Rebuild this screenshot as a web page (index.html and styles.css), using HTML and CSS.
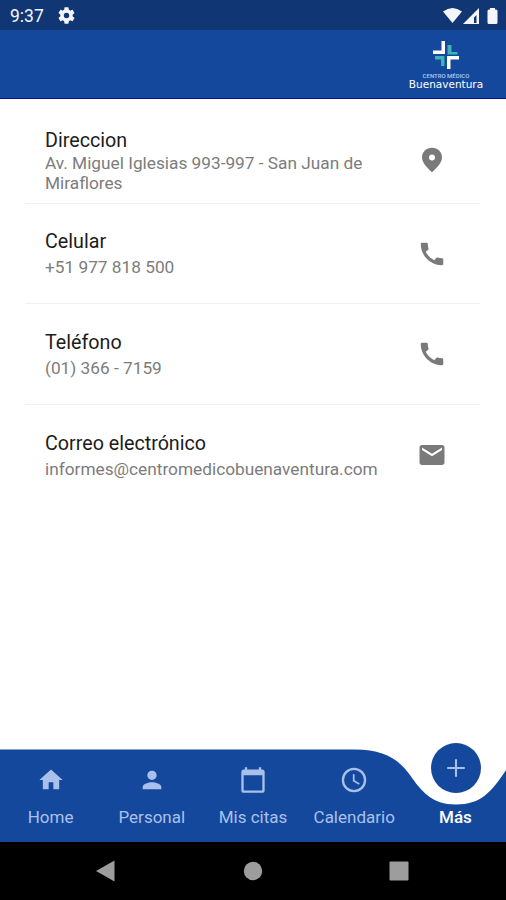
FILE: index.html
```html
<!DOCTYPE html>
<html lang="es">

<head>
    <meta charset="UTF-8">
    <meta name="viewport" content="width=device-width, initial-scale=1.0">
    <title>Centro Médico Buenaventura</title>
    <link rel="stylesheet" href="styles.css">
</head>

<body>
    <div class="screen">
        <div class="status-bar">
            <span class="time">9:37</span>
            <svg class="gear" viewBox="2 2 20 20"><path d="M19.14 12.94c.04-.3.06-.61.06-.94 0-.32-.02-.64-.07-.94l2.03-1.58a.49.49 0 0 0 .12-.61l-1.92-3.32a.49.49 0 0 0-.59-.22l-2.39.96c-.5-.38-1.03-.7-1.62-.94l-.36-2.54a.48.48 0 0 0-.48-.41h-3.84c-.24 0-.43.17-.47.41l-.36 2.54c-.59.24-1.13.57-1.62.94l-2.39-.96a.48.48 0 0 0-.59.22L2.74 8.87c-.12.21-.08.47.12.61l2.03 1.58c-.05.3-.09.63-.09.94s.02.64.07.94l-2.03 1.58a.49.49 0 0 0-.12.61l1.92 3.32c.12.22.37.29.59.22l2.39-.96c.5.38 1.03.7 1.62.94l.36 2.54c.05.24.24.41.48.41h3.84c.24 0 .44-.17.47-.41l.36-2.54c.59-.24 1.13-.56 1.62-.94l2.39.96c.22.08.47 0 .59-.22l1.92-3.32a.48.48 0 0 0-.12-.61l-2.01-1.58zM12 15.200A3.200 3.200 0 1 1 12 8.800a3.200 3.200 0 0 1 0 6.400z"/></svg>
            <svg class="signals" viewBox="0 0 56 18">
                <path d="M0 4.500Q9.500-2.500 19 4.500L9.500 16z"/>
                <path d="M36 1V17H20zM33.500 8L31 10.500V16h2.500z" fill-rule="evenodd"/>
                <path d="M47 1h5v1.500h1q1.500 0 1.500 1.500v11.500q0 1.500-1.500 1.500h-7q-1.500 0-1.500-1.500V4q0-1.500 1.500-1.500h1z"/>
            </svg>
        </div>

        <header class="app-bar">
            <div class="brand">
                <svg class="brand-mark" viewBox="0 0 28 28">
                    <path class="teal" d="M15.500 4h4v7h6v2.500h-10zM3 15h9.500v10H9v-6.500H3z"/>
                    <path class="white" d="M9.500 0h3.500v13H1V9.500h8.500zM15 15h12v3.500h-8.500V28H15z"/>
                </svg>
                <span class="brand-top">CENTRO MÉDICO</span>
                <span class="brand-name">Buenaventura</span>
            </div>
        </header>

        <main class="contacts">
            <div class="contact contact-address">
                <div class="contact-text">
                    <h2>Direccion</h2>
                    <p>Av. Miguel Iglesias 993-997 - San Juan de Miraflores</p>
                </div>
                <svg class="contact-icon" viewBox="0 0 24 24"><path d="M12 2.200C7.500 2.200 4 5.600 4 9.800c0 4.700 4.500 8.700 8 12 3.500-3.300 8-7.300 8-12 0-4.200-3.500-7.600-8-7.600zm0 10.100a2.400 2.400 0 1 1 0-4.800 2.400 2.400 0 0 1 0 4.800z"/></svg>
            </div>
            <div class="contact">
                <div class="contact-text">
                    <h2>Celular</h2>
                    <p>+51 977 818 500</p>
                </div>
                <svg class="contact-icon" viewBox="0 0 24 24"><path d="M20.010 15.380c-1.230 0-2.420-.2-3.530-.56a.98.98 0 0 0-1.010.24l-1.570 1.970c-2.830-1.350-5.480-3.900-6.890-6.830l1.950-1.660c.27-.28.35-.67.24-1.020-.37-1.110-.56-2.300-.56-3.530 0-.54-.45-.99-.99-.99H4.190C3.650 3 3 3.240 3 3.990 3 13.280 10.730 21 20.010 21c.71 0 .99-.63.99-1.180v-3.450c0-.54-.45-.99-.99-.99z"/></svg>
            </div>
            <div class="contact">
                <div class="contact-text">
                    <h2>Teléfono</h2>
                    <p>(01) 366 - 7159</p>
                </div>
                <svg class="contact-icon" viewBox="0 0 24 24"><path d="M20.010 15.380c-1.230 0-2.420-.2-3.530-.56a.98.98 0 0 0-1.010.24l-1.570 1.970c-2.830-1.350-5.480-3.900-6.890-6.830l1.950-1.660c.27-.28.35-.67.24-1.020-.37-1.110-.56-2.300-.56-3.530 0-.54-.45-.99-.99-.99H4.190C3.650 3 3 3.240 3 3.990 3 13.280 10.730 21 20.010 21c.71 0 .99-.63.99-1.180v-3.450c0-.54-.45-.99-.99-.99z"/></svg>
            </div>
            <div class="contact">
                <div class="contact-text">
                    <h2>Correo electrónico</h2>
                    <p>informes@centromedicobuenaventura.com</p>
                </div>
                <svg class="contact-icon" viewBox="0 0 24 24"><path d="M20 4H4c-1.100 0-1.990.9-1.990 2L2 18c0 1.100.9 2 2 2h16c1.100 0 2-.9 2-2V6c0-1.100-.9-2-2-2zm0 4l-8 5-8-5V6l8 5 8-5v2z"/></svg>
            </div>
        </main>

        <nav class="tab-bar">
            <!-- bar background with the dip under the active tab -->
            <svg class="tab-curve" viewBox="0 0 506 93">
                <path d="M0 .5H355C385 .5 399 11 410 26C421 42 432 55.500 456 55.500C480 55.500 491 44 506 21V93H0z"/>
            </svg>
            <a class="tab">
                <svg viewBox="0 0 24 24"><path d="M10 20v-6h4v6h5v-8h3L12 3 2 12h3v8z"/></svg>
                <span>Home</span>
            </a>
            <a class="tab">
                <svg viewBox="0 0 24 24"><path d="M12 12c2.210 0 4-1.790 4-4s-1.790-4-4-4-4 1.790-4 4 1.790 4 4 4zm0 2c-2.670 0-8 1.340-8 4v2h16v-2c0-2.660-5.330-4-8-4z"/></svg>
                <span>Personal</span>
            </a>
            <a class="tab">
                <svg viewBox="0 0 24 24"><path d="M20 3h-1V1h-2v2H7V1H5v2H4c-1.100 0-2 .9-2 2v16c0 1.100.9 2 2 2h16c1.100 0 2-.9 2-2V5c0-1.100-.9-2-2-2zm0 18H4V8h16v13z"/></svg>
                <span>Mis citas</span>
            </a>
            <a class="tab">
                <svg viewBox="0 0 24 24"><path d="M12 1.500a10.500 10.500 0 1 0 0 21 10.500 10.500 0 0 0 0-21zm0 19a8.500 8.500 0 1 1 0-17 8.500 8.500 0 0 1 0 17zM12.500 7H11v6l5.250 3.150.75-1.230-4.500-2.670z"/></svg>
                <span>Calendario</span>
            </a>
            <a class="tab active">
                <div class="tab-bubble">
                    <svg viewBox="0 0 24 24"><path d="M19.500 12.900h-6.600v6.600h-1.800v-6.600H4.500v-1.800h6.600V4.500h1.800v6.600h6.600z"/></svg>
                </div>
                <span>Más</span>
            </a>
        </nav>

        <div class="system-bar">
            <svg viewBox="0 0 20 22"><path d="M0 11L18.500.5v21z"/></svg>
            <svg viewBox="0 0 20 22"><circle cx="10" cy="11" r="9.200"/></svg>
            <svg viewBox="0 0 20 22"><rect x=".5" y="1.500" width="19" height="19" rx="1"/></svg>
        </div>
    </div>
</body>

</html>
```

FILE: styles.css
```css
* {
    box-sizing: border-box;
}

body {
    margin: 0;
    font-family: Roboto, "Liberation Sans", sans-serif;
    background-color: #ffffff;
}

h2,
p {
    margin: 0;
    font-weight: 400;
}

svg {
    display: block;
    fill: currentColor;
}

.screen {
    display: flex;
    flex-direction: column;
    width: 506px;
    height: 900px;
    overflow: hidden;
}

.status-bar {
    display: flex;
    align-items: center;
    height: 30px;
    padding: 1px 7px 0 10px;
    background-color: #103674;
    color: #f4f5ff;
}

.time {
    font-size: 17.5px;
    line-height: 30px;
}

.gear {
    width: 17px;
    height: 17px;
    margin-left: 14px;
}

.signals {
    width: 56px;
    height: 18px;
    margin-left: auto;
}

.app-bar {
    display: flex;
    justify-content: flex-end;
    height: 69px;
    padding: 11px 22px 0 0;
    background-color: #14489c;
    border-bottom: 1px solid #07108a;
}

.brand {
    display: flex;
    flex-direction: column;
    align-items: center;
    width: 76px;
    color: #ffffff;
    white-space: nowrap;
}

.brand-mark {
    width: 28px;
    height: 28px;
}

.brand-mark .teal {
    fill: #3fb3b5;
}

.brand-top {
    margin-top: 3px;
    font-size: 6px;
    font-weight: 500;
    line-height: 7px;
    color: #b9c8e8;
}

.brand-name {
    font-family: "DejaVu Sans", sans-serif;
    font-size: 10.5px;
    line-height: 11px;
}

.contacts {
    flex: 1;
    padding: 4px 26px 0 25px;
}

.contact {
    display: flex;
    align-items: center;
    height: 100.5px;
    padding: 3px 33px 0 20px;
    border-bottom: 1px solid #f1f1f1;
}

.contact:last-child {
    border-bottom: none;
}

.contact-text {
    width: 345px;
}

.contact h2 {
    font-size: 19.7px;
    line-height: 26px;
    color: #1c1c1c;
}

.contact p {
    font-size: 17.25px;
    line-height: 25px;
    color: #7c7c7c;
}

.contact-address {
    padding-top: 16px;
}

.contact-address h2 {
    line-height: 24px;
}

.contact-address p {
    width: 330px;
    line-height: 20px;
}

.contact-icon {
    width: 30px;
    height: 30px;
    margin: 0 0 2px auto;
    color: #7a7a7a;
}

.tab-bar {
    position: relative;
    display: flex;
    height: 93px;
    color: #a9c0ec;
}

.tab-curve {
    position: absolute;
    top: 0;
    left: 0;
    width: 506px;
    height: 93px;
    color: #14489c;
}

.tab {
    position: relative;
    display: flex;
    flex: 1;
    flex-direction: column;
    align-items: center;
    padding-top: 17px;
}

.tab svg {
    width: 28px;
    height: 28px;
}

.tab span {
    margin-top: 11px;
    font-size: 17px;
    line-height: 24px;
}

.tab.active {
    padding-top: 0;
}

.tab.active span {
    color: #ffffff;
    font-weight: 500;
    margin-top: 12px;
}

.tab-bubble {
    display: flex;
    align-items: center;
    justify-content: center;
    width: 50px;
    height: 50px;
    margin: -6px 0 0 1px;
    border-radius: 50%;
    background-color: #14489c;
}

.system-bar {
    display: flex;
    align-items: center;
    justify-content: space-between;
    height: 58px;
    padding: 0 97px 0 96px;
    background-color: #000000;
    color: #9d9d9d;
}

.system-bar svg {
    width: 20px;
    height: 22px;
}
```
